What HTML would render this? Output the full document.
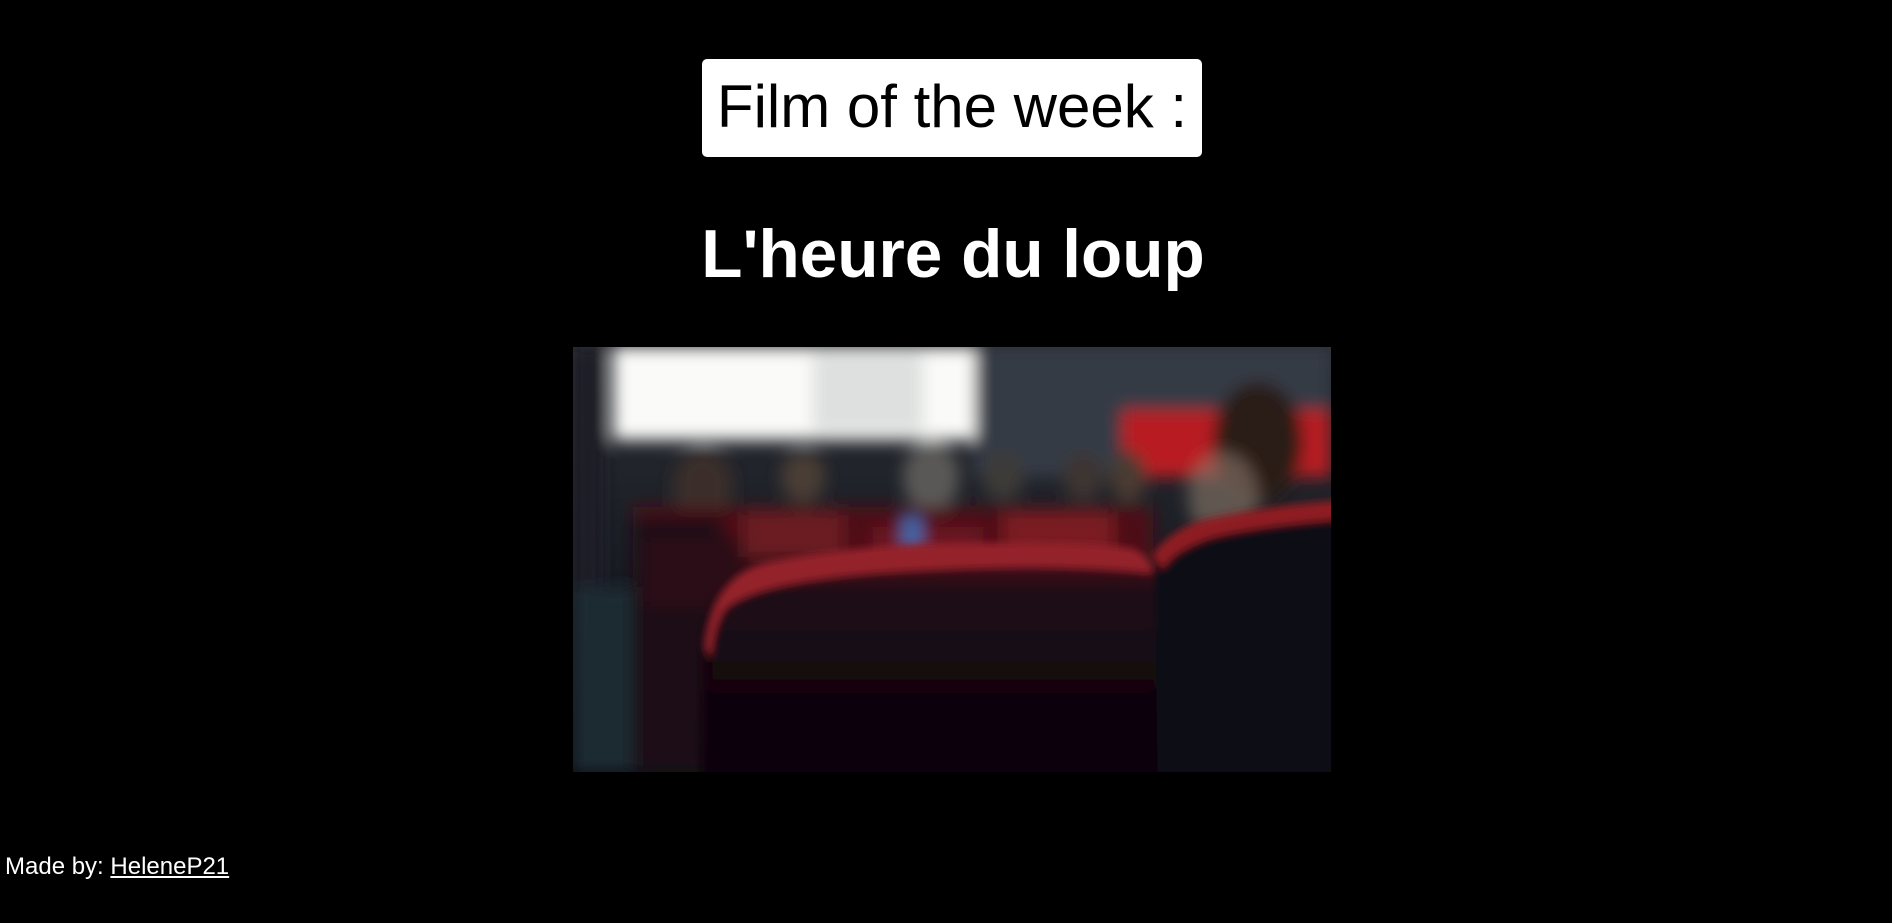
<!DOCTYPE html>
<html><head><style>
html,body{margin:0;padding:0;background:#000;width:1892px;height:923px;overflow:hidden;font-family:"Liberation Sans",Arial,sans-serif}
.box{position:absolute;left:702px;top:59px;width:500px;height:98px;background:#fff;border-radius:5px;}
.box span{position:absolute;left:0;right:0;top:15px;text-align:center;font-size:60px;color:#000;line-height:66px}
.title{position:absolute;left:7px;width:1892px;top:216px;text-align:center;color:#fff;font-weight:bold;font-size:67.5px;line-height:78px}
.img{position:absolute;left:573px;top:347px;width:758px;height:425px;overflow:hidden}
.foot{position:absolute;left:5px;top:852px;color:#fff;font-size:24px;line-height:30px}
.foot u{text-decoration:underline}
</style></head><body>
<div class="box"><span>Film of the week :</span></div>
<div class="title">L'heure du loup</div>
<div class="img">
<svg width="758" height="425" viewBox="0 0 758 425">
<defs>
<filter id="b" x="-20%" y="-20%" width="140%" height="140%"><feGaussianBlur stdDeviation="8"/></filter>
<filter id="b2" x="-10%" y="-10%" width="120%" height="130%"><feGaussianBlur stdDeviation="4"/></filter>
<linearGradient id="bg" x1="0" y1="0" x2="0" y2="1"><stop offset="0" stop-color="#2a2d33"/><stop offset="1" stop-color="#0b0d16"/></linearGradient>
<linearGradient id="seat" x1="0" y1="0" x2="0" y2="1"><stop offset="0" stop-color="#5a1420"/><stop offset="0.2" stop-color="#1e0814"/><stop offset="1" stop-color="#04040c"/></linearGradient>
</defs>
<rect width="758" height="425" fill="url(#bg)"/>
<g filter="url(#b)">
<rect x="0" y="0" width="30" height="425" fill="#1b1e25"/>
<rect x="400" y="0" width="358" height="130" fill="#363b44"/>
<rect x="40" y="0" width="362" height="93" fill="#fafaf8"/>
<rect x="240" y="5" width="110" height="80" fill="#dde0df"/>
<rect x="549" y="63" width="209" height="67" fill="#b81c22"/>
<rect x="0" y="240" width="120" height="185" fill="#1e2a30"/>
<ellipse cx="130" cy="140" rx="30" ry="38" fill="#3b2e2a"/>
<ellipse cx="230" cy="130" rx="22" ry="26" fill="#4a3c36"/>
<ellipse cx="358" cy="130" rx="28" ry="35" fill="#5a5856"/>
<ellipse cx="430" cy="130" rx="20" ry="24" fill="#3e3a38"/>
<ellipse cx="510" cy="130" rx="20" ry="24" fill="#3e3530"/>
<ellipse cx="555" cy="130" rx="18" ry="26" fill="#4a3a32"/>
<rect x="60" y="160" width="520" height="60" fill="#4e1018"/>
<rect x="60" y="170" width="90" height="255" fill="#1a0d16"/>
<rect x="70" y="190" width="160" height="70" fill="#2a0e18"/>
<rect x="170" y="165" width="100" height="45" fill="#6a1a20"/>
<rect x="300" y="180" width="110" height="50" fill="#6a1820"/>
<rect x="430" y="165" width="110" height="45" fill="#7a1c24"/>
<rect x="330" y="170" width="18" height="35" fill="#3a6ab0"/>
<ellipse cx="685" cy="95" rx="45" ry="60" fill="#2a1a18"/>
<ellipse cx="650" cy="150" rx="35" ry="45" fill="#8a7a6a" opacity="0.6"/>
</g>
<g filter="url(#b2)">
<path d="M579 208 Q600 180 634 172 Q700 158 758 154 L770 154 L770 450 L575 450 Z" fill="#0c0812"/>
<path d="M579 208 Q600 180 634 172 Q700 158 758 154 L770 154 L770 172 Q690 178 640 190 Q600 203 590 222 Z" fill="#8e1a22"/>
<path d="M128 450 L130 290 Q140 225 199 214 Q300 196 392 196 Q540 195 561 202 Q580 210 582 240 L585 450 Z" fill="url(#seat)"/>
<path d="M132 300 Q140 225 199 214 Q300 196 392 196 Q540 195 561 202 Q578 210 580 226 Q470 214 300 226 Q180 236 152 262 Q140 280 138 310 Z" fill="#94222a"/>
</g>
</svg>
</div>
<div class="foot">Made by: <u>HeleneP21</u></div>
</body></html>
